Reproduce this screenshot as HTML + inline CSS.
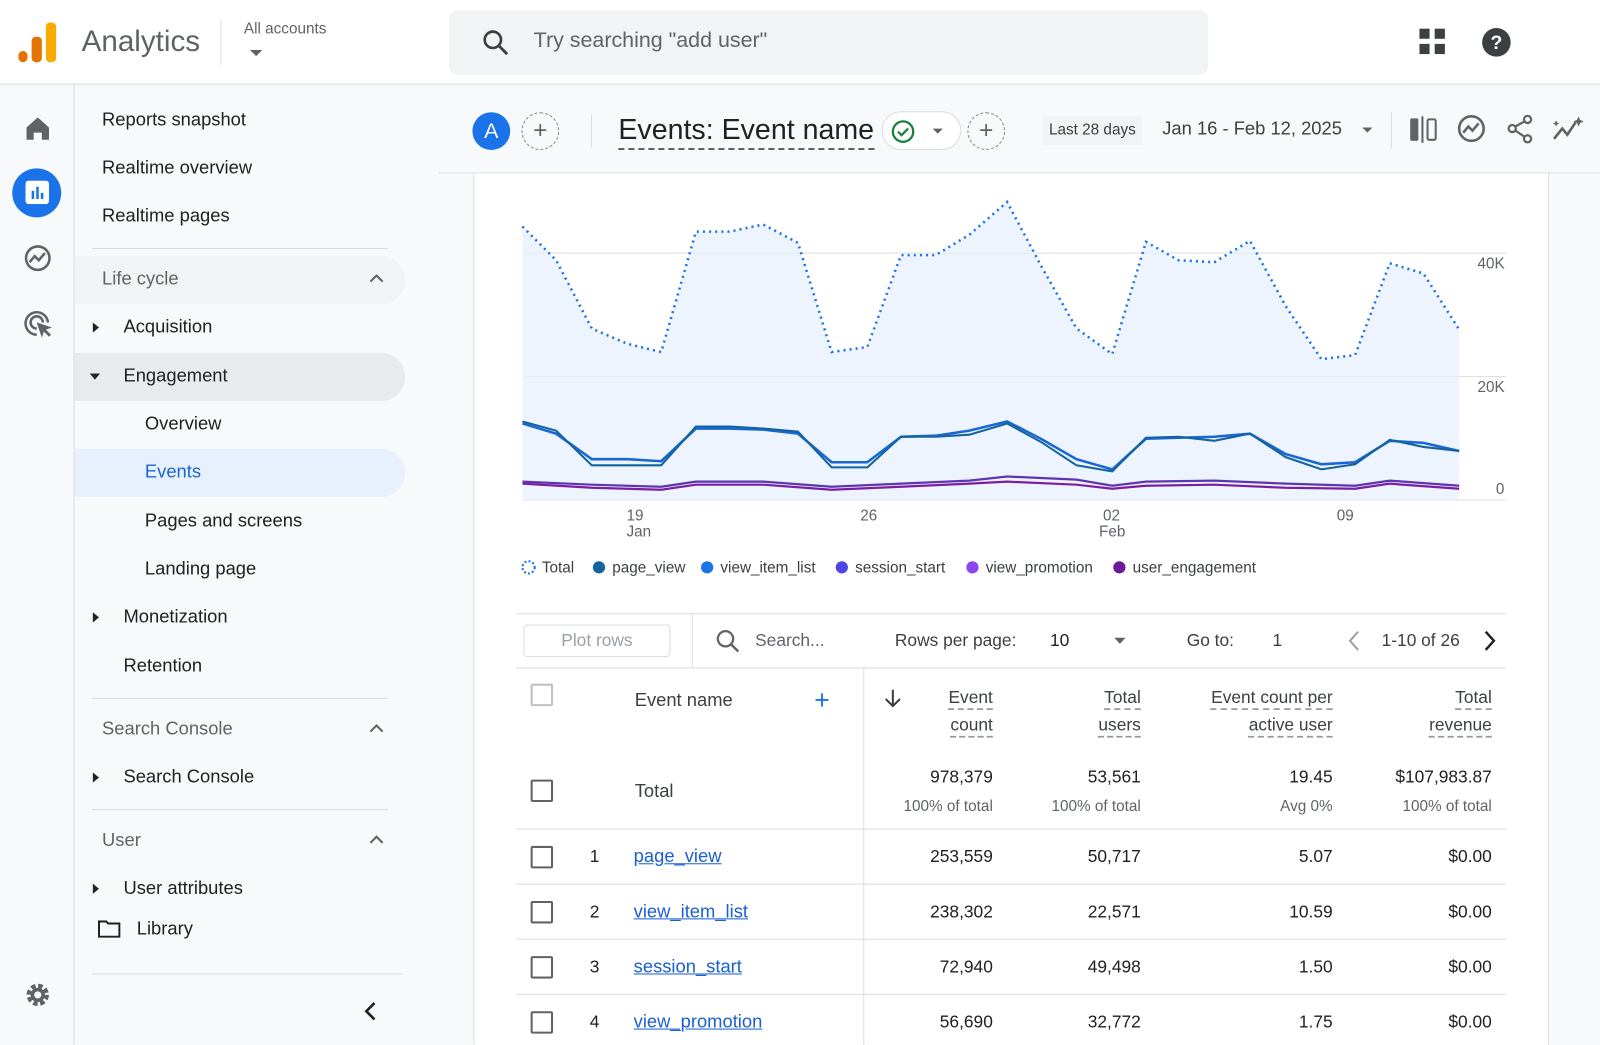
<!DOCTYPE html>
<html><head><meta charset="utf-8"><style>
*{box-sizing:border-box;margin:0;padding:0}
html,body{width:1600px;height:1045px;overflow:hidden;background:#f8f9fa}
body{font-family:"Liberation Sans",Arial,sans-serif;color:#202124}
#w{position:absolute;left:0;top:0;width:1568px;height:1024px;transform:scale(1.0204);transform-origin:0 0;background:#f8f9fa}
.a{position:absolute;white-space:nowrap}
.nav{font-size:18px;color:#202124}
.sec{font-size:18px;color:#5f6368}
.hr{position:absolute;height:1px;background:#dadce0}
.r{text-align:right}
.num{font-size:17px;color:#202124}
.sub{font-size:15px;color:#5f6368}
.cb{position:absolute;width:22px;height:22px;border:2px solid #5f6368;border-radius:2px}
.lnk{color:#1a5fd0;text-decoration:underline;font-size:18px}
.th{font-size:17px;color:#3c4043;text-decoration:underline dashed #999;text-underline-offset:6px;text-align:right;line-height:27px}
</style></head><body><div id="w">
<div class="a" style="left:0;top:0;width:1568px;height:83px;background:#fff;border-bottom:1px solid #dadce0"></div>
<svg class="a" style="left:18px;top:22px" width="38" height="40"><rect x="0" y="28" width="9" height="11" rx="4.5" fill="#e37400"/><rect x="13" y="14" width="10" height="25" rx="4" fill="#e37400"/><rect x="27" y="0" width="10" height="39" rx="4" fill="#f9ab00"/></svg>
<div class="a" style="left:80px;top:25px;font-size:29px;color:#5f6368">Analytics</div>
<div class="a" style="left:216px;top:20px;width:1px;height:44px;background:#dadce0"></div>
<div class="a" style="left:239px;top:20px;font-size:15px;color:#5f6368">All accounts</div>
<svg class="a" style="left:244px;top:48px" width="14" height="8"><path d="M1 1h12L7 7z" fill="#5f6368"/></svg>
<div class="a" style="left:440px;top:10px;width:744px;height:63px;background:#f1f3f4;border-radius:8px"></div>
<svg class="a" style="left:472px;top:28px" width="28" height="28"><circle cx="11" cy="11" r="8" fill="none" stroke="#3c4043" stroke-width="2.6"/><path d="M17 17l8 8" stroke="#3c4043" stroke-width="2.8"/></svg>
<div class="a" style="left:523px;top:28px;font-size:21px;color:#5f6368">Try searching "add user"</div>
<svg class="a" style="left:1391px;top:28px" width="26" height="26" fill="#3c4043"><rect x="0" y="0" width="10" height="10"/><rect x="15" y="0" width="10" height="10"/><rect x="0" y="15" width="10" height="10"/><rect x="15" y="15" width="10" height="10"/></svg>
<svg class="a" style="left:1452px;top:27px" width="29" height="29"><circle cx="14.5" cy="14.5" r="14" fill="#3c4043"/><text x="14.5" y="21" font-size="19" font-weight="bold" fill="#fff" text-anchor="middle" font-family="Liberation Sans">?</text></svg>
<div class="a" style="left:72px;top:83px;width:1px;height:941px;background:#dadce0"></div>
<svg class="a" style="left:24px;top:113px" width="26" height="26"><path d="M2 12L13 2l11 10v12h-7v-7H9v7H2z" fill="#5f6368"/></svg>
<div class="a" style="left:12px;top:165px;width:48px;height:48px;border-radius:50%;background:#1a73e8"></div>
<svg class="a" style="left:25px;top:177px" width="23" height="23"><rect width="23" height="23" rx="3" fill="#fff"/><rect x="6" y="10" width="2.5" height="8" fill="#1a73e8"/><rect x="10.5" y="6" width="2.5" height="12" fill="#1a73e8"/><rect x="15" y="12" width="2.5" height="6" fill="#1a73e8"/></svg>
<svg class="a" style="left:23px;top:239px" width="28" height="28"><circle cx="14" cy="14" r="11.5" fill="none" stroke="#5f6368" stroke-width="2.5"/><path d="M6 18l5-6 4 4 6-7" fill="none" stroke="#5f6368" stroke-width="2.5"/></svg>
<svg class="a" style="left:23px;top:303px" width="30" height="30"><path d="M13 25A11 11 0 1 1 24 13" fill="none" stroke="#5f6368" stroke-width="2.5"/><path d="M13 19A6 6 0 1 1 19 13" fill="none" stroke="#5f6368" stroke-width="2.5"/><path d="M13 13l15 5-6 2 5 5-2 2-5-5-2 6z" fill="#5f6368"/></svg>
<svg class="a" style="left:23px;top:961px" width="28" height="28"><circle cx="14" cy="14" r="8" fill="none" stroke="#5f6368" stroke-width="6" stroke-dasharray="4 2.3"/><circle cx="14" cy="14" r="7" fill="#5f6368"/><circle cx="14" cy="14" r="3.5" fill="#f8f9fa"/></svg>
<div class="a nav" style="left:100px;top:107px">Reports snapshot</div>
<div class="a nav" style="left:100px;top:154px">Realtime overview</div>
<div class="a nav" style="left:100px;top:201px">Realtime pages</div>
<div class="hr" style="left:90px;top:243px;width:290px"></div>
<div class="a" style="left:73px;top:251px;width:324px;height:47px;border-radius:0 24px 24px 0;background:#f1f3f4"></div>
<div class="a sec" style="left:100px;top:263px">Life cycle</div>
<svg class="a" style="left:362px;top:268px" width="14" height="9"><path d="M1 8l6-6 6 6" fill="none" stroke="#5f6368" stroke-width="2"/></svg>
<svg class="a" style="left:90px;top:315px" width="8" height="12"><path d="M1 1l6 5-6 5z" fill="#202124"/></svg>
<div class="a nav" style="left:121px;top:310px">Acquisition</div>
<div class="a" style="left:73px;top:346px;width:324px;height:47px;border-radius:0 24px 24px 0;background:#e8eaed"></div>
<svg class="a" style="left:87px;top:365px" width="12" height="8"><path d="M1 1h10L6 7z" fill="#202124"/></svg>
<div class="a nav" style="left:121px;top:358px">Engagement</div>
<div class="a nav" style="left:142px;top:405px">Overview</div>
<div class="a" style="left:73px;top:440px;width:324px;height:47px;border-radius:0 24px 24px 0;background:#e8f0fe"></div>
<div class="a nav" style="left:142px;top:452px;color:#1967d2">Events</div>
<div class="a nav" style="left:142px;top:500px">Pages and screens</div>
<div class="a nav" style="left:142px;top:547px">Landing page</div>
<svg class="a" style="left:90px;top:599px" width="8" height="12"><path d="M1 1l6 5-6 5z" fill="#202124"/></svg>
<div class="a nav" style="left:121px;top:594px">Monetization</div>
<div class="a nav" style="left:121px;top:642px">Retention</div>
<div class="hr" style="left:90px;top:684px;width:290px"></div>
<div class="a sec" style="left:100px;top:704px">Search Console</div>
<svg class="a" style="left:362px;top:709px" width="14" height="9"><path d="M1 8l6-6 6 6" fill="none" stroke="#5f6368" stroke-width="2"/></svg>
<svg class="a" style="left:90px;top:756px" width="8" height="12"><path d="M1 1l6 5-6 5z" fill="#202124"/></svg>
<div class="a nav" style="left:121px;top:751px">Search Console</div>
<div class="hr" style="left:90px;top:793px;width:290px"></div>
<div class="a sec" style="left:100px;top:813px">User</div>
<svg class="a" style="left:362px;top:818px" width="14" height="9"><path d="M1 8l6-6 6 6" fill="none" stroke="#5f6368" stroke-width="2"/></svg>
<svg class="a" style="left:90px;top:865px" width="8" height="12"><path d="M1 1l6 5-6 5z" fill="#202124"/></svg>
<div class="a nav" style="left:121px;top:860px">User attributes</div>
<svg class="a" style="left:96px;top:902px" width="22" height="17"><path d="M1 1h7l2 2h11v13H1z" fill="none" stroke="#202124" stroke-width="2"/></svg>
<div class="a nav" style="left:134px;top:900px">Library</div>
<div class="hr" style="left:90px;top:954px;width:305px"></div>
<svg class="a" style="left:356px;top:981px" width="14" height="20"><path d="M11 2L3 10l8 8" fill="none" stroke="#202124" stroke-width="2.6"/></svg>
<div class="a" style="left:430px;top:169px;width:1138px;height:1px;background:#e0e0e0"></div>
<div class="a" style="left:463px;top:110px;width:37px;height:37px;border-radius:50%;background:#1a73e8;color:#fff;font-size:21px;text-align:center;line-height:37px">A</div>
<div class="a" style="left:511px;top:110px;width:37px;height:37px;border-radius:50%;border:1.5px dashed #80868b;color:#5f6368;font-size:24px;text-align:center;line-height:33px">+</div>
<div class="a" style="left:579px;top:112px;width:1px;height:32px;background:#dadce0"></div>
<div class="a" style="left:606px;top:109px;font-size:28px;color:#202124;border-bottom:2px dashed #5f6368;line-height:36px">Events: Event name</div>
<div class="a" style="left:864px;top:109px;width:78px;height:38px;border-radius:19px;border:1px solid #dadce0;background:#fff"></div>
<svg class="a" style="left:873px;top:117px" width="24" height="24"><circle cx="12" cy="12" r="10" fill="none" stroke="#188038" stroke-width="2.2"/><path d="M7 12l3.5 3.5L17 9" fill="none" stroke="#188038" stroke-width="2.2"/></svg>
<svg class="a" style="left:913px;top:125px" width="12" height="7"><path d="M1 1h10L6 6z" fill="#5f6368"/></svg>
<div class="a" style="left:948px;top:110px;width:37px;height:37px;border-radius:50%;border:1.5px dashed #80868b;color:#5f6368;font-size:24px;text-align:center;line-height:33px">+</div>
<div class="a" style="left:1022px;top:114px;height:28px;padding:0 6px;background:#f1f3f4;font-size:15px;line-height:28px;color:#3c4043">Last 28 days</div>
<div class="a" style="left:1139px;top:116px;font-size:18px;color:#3c4043">Jan 16 - Feb 12, 2025</div>
<svg class="a" style="left:1334px;top:124px" width="12" height="7"><path d="M1 1h10L6 6z" fill="#5f6368"/></svg>
<div class="a" style="left:1363px;top:110px;width:1px;height:36px;background:#dadce0"></div>
<svg class="a" style="left:1381px;top:113px" width="28" height="28"><rect x="1" y="3" width="8" height="22" rx="1.5" fill="#5f6368"/><rect x="12" y="1" width="2" height="26" fill="#5f6368"/><rect x="18" y="4" width="8" height="20" rx="1.5" fill="none" stroke="#5f6368" stroke-width="2"/></svg>
<svg class="a" style="left:1428px;top:112px" width="29" height="29"><circle cx="14" cy="14" r="12" fill="none" stroke="#5f6368" stroke-width="2.5"/><path d="M6 18l5-6 4 4 6-7" fill="none" stroke="#5f6368" stroke-width="2.5"/></svg>
<svg class="a" style="left:1477px;top:112px" width="27" height="29"><circle cx="20" cy="5" r="3.5" fill="none" stroke="#5f6368" stroke-width="2.2"/><circle cx="5" cy="14" r="3.5" fill="none" stroke="#5f6368" stroke-width="2.2"/><circle cx="20" cy="24" r="3.5" fill="none" stroke="#5f6368" stroke-width="2.2"/><path d="M8 12l9-5M8 16l9 6" stroke="#5f6368" stroke-width="2.2"/></svg>
<svg class="a" style="left:1521px;top:112px" width="33" height="28"><path d="M2 24l8-10 5 6 8-12" fill="none" stroke="#5f6368" stroke-width="2.6"/><path d="M26 2l1.5 3.5L31 7l-3.5 1.5L26 12l-1.5-3.5L21 7l3.5-1.5z" fill="#5f6368"/><path d="M4 6l1 2 2 1-2 1-1 2-1-2-2-1 2-1z" fill="#5f6368"/></svg>
<div class="a" style="left:464px;top:170px;width:1054px;height:854px;background:#fff;border-left:1px solid #e0e0e0;border-right:1px solid #e0e0e0"></div>
<svg class="a" style="left:464px;top:170px" width="1054" height="400" font-family="Liberation Sans" font-size="15" fill="#5f6368">
<g transform="translate(-464,-170)">
<line x1="512" y1="248" x2="1476" y2="248" stroke="#e0e0e0"/>
<line x1="512" y1="369" x2="1476" y2="369" stroke="#e0e0e0"/>
<line x1="512" y1="490" x2="1476" y2="490" stroke="#e0e0e0"/>
<path d="M512,222 545,255 580,322 615,337 648,345 682,227 715,227 748,220 782,238 815,345 850,340 883,250 917,250 950,230 987,198 1020,260 1055,322 1090,347 1123,237 1155,255 1190,257 1225,236 1260,300 1295,352 1328,348 1362,258 1395,268 1430,323 L1430,490 512,490Z" fill="#e8f0fe" opacity="0.75"/>
<path d="M512,222 545,255 580,322 615,337 648,345 682,227 715,227 748,220 782,238 815,345 850,340 883,250 917,250 950,230 987,198 1020,260 1055,322 1090,347 1123,237 1155,255 1190,257 1225,236 1260,300 1295,352 1328,348 1362,258 1395,268 1430,323" fill="none" stroke="#1a73e8" stroke-width="2.5" stroke-dasharray="2 4"/>
<path d="M512,415 545,425 580,450 615,450 648,452 682,420 715,420 748,421 782,425 815,453 850,453 883,428 917,427 950,422 987,413 1020,430 1055,450 1090,460 1123,430 1155,429 1190,428 1225,425 1260,445 1295,455 1328,453 1362,432 1395,434 1430,442" fill="none" stroke="#1967d2" stroke-width="2.5"/>
<path d="M512,413 545,422 580,456 615,456 648,456 682,418 715,418 748,420 782,423 815,458 850,458 883,428 917,428 950,426 987,415 1020,433 1055,456 1090,462 1123,429 1155,428 1190,432 1225,425 1260,448 1295,460 1328,455 1362,431 1395,438 1430,442" fill="none" stroke="#12639e" stroke-width="2"/>
<path d="M512,472 580,475 648,477 682,472 748,472 815,477 883,474 950,471 987,467 1055,470 1090,476 1123,472 1190,471 1260,474 1328,476 1362,471 1430,476" fill="none" stroke="#5e35b1" stroke-width="2.2"/>
<path d="M512,474 580,478 648,480 682,475 748,475 815,480 883,477 950,474 987,472 1055,475 1090,479 1123,476 1190,475 1260,478 1328,479 1362,474 1430,479" fill="none" stroke="#7b1fa2" stroke-width="2.2"/>
<text x="1448" y="263">40K</text><text x="1448" y="384">20K</text><text x="1466" y="484">0</text>
<text x="614" y="510">19</text><text x="614" y="526">Jan</text><text x="843" y="510">26</text><text x="1081" y="510">02</text><text x="1077" y="526">Feb</text><text x="1310" y="510">09</text>
<g font-size="15" fill="#3c4043">
<circle cx="518" cy="556" r="6" fill="none" stroke="#1a73e8" stroke-width="2" stroke-dasharray="2 2"/><text x="531" y="561">Total</text>
<circle cx="587" cy="556" r="6" fill="#12639e"/><text x="600" y="561">page_view</text>
<circle cx="693" cy="556" r="6" fill="#1a73e8"/><text x="706" y="561">view_item_list</text>
<circle cx="825" cy="556" r="6" fill="#4f46e5"/><text x="838" y="561">session_start</text>
<circle cx="953" cy="556" r="6" fill="#8e44ef"/><text x="966" y="561">view_promotion</text>
<circle cx="1097" cy="556" r="6" fill="#6a1b9a"/><text x="1110" y="561">user_engagement</text>
</g></g></svg>
<div class="hr" style="left:506px;top:601px;width:970px"></div>
<div class="a" style="left:513px;top:612px;width:144px;height:32px;border:1px solid #dadce0;border-radius:4px;color:#9aa0a6;font-size:17px;text-align:center;line-height:30px">Plot rows</div>
<div class="a" style="left:678px;top:601px;width:1px;height:53px;background:#dadce0"></div>
<svg class="a" style="left:701px;top:616px" width="26" height="26"><circle cx="10" cy="10" r="7.5" fill="none" stroke="#5f6368" stroke-width="2.2"/><path d="M15.5 15.5l7 7" stroke="#5f6368" stroke-width="2.4"/></svg>
<div class="a" style="left:740px;top:618px;font-size:17px;color:#5f6368">Search...</div>
<div class="a" style="left:877px;top:618px;font-size:17px;color:#3c4043">Rows per page:</div>
<div class="a" style="left:1029px;top:618px;font-size:17px;color:#202124">10</div>
<svg class="a" style="left:1091px;top:624px" width="13" height="8"><path d="M1 1h11L6.5 7z" fill="#5f6368"/></svg>
<div class="a" style="left:1163px;top:618px;font-size:17px;color:#3c4043">Go to:</div>
<div class="a" style="left:1247px;top:618px;font-size:17px;color:#3c4043">1</div>
<svg class="a" style="left:1320px;top:617px" width="14" height="22"><path d="M11 2L3 11l8 9" fill="none" stroke="#9aa0a6" stroke-width="2"/></svg>
<div class="a" style="left:1354px;top:618px;font-size:17px;color:#3c4043">1-10 of 26</div>
<svg class="a" style="left:1453px;top:617px" width="14" height="22"><path d="M3 2l8 9-8 9" fill="none" stroke="#202124" stroke-width="2.4"/></svg>
<div class="hr" style="left:506px;top:654px;width:970px"></div>
<div class="a" style="left:846px;top:654px;width:1px;height:370px;background:#dadce0"></div>
<div class="cb" style="left:520px;top:670px;border-color:#bdc1c6"></div>
<div class="a" style="left:622px;top:676px;font-size:18px;color:#3c4043">Event name</div>
<div class="a" style="left:798px;top:671px;font-size:26px;color:#1a73e8">+</div>
<svg class="a" style="left:866px;top:675px" width="18" height="20"><path d="M9 1v16M2 10l7 7 7-7" fill="none" stroke="#3c4043" stroke-width="2"/></svg>
<div class="a th" style="right:595px;top:670px">Event<br>count</div>
<div class="a th" style="right:450px;top:670px">Total<br>users</div>
<div class="a th" style="right:262px;top:670px">Event count per<br>active user</div>
<div class="a th" style="right:106px;top:670px">Total<br>revenue</div>
<div class="cb" style="left:520px;top:764px"></div>
<div class="a" style="left:622px;top:765px;font-size:18px;color:#3c4043">Total</div>
<div class="a num r" style="right:595px;top:752px">978,379</div><div class="a sub r" style="right:595px;top:782px">100% of total</div>
<div class="a num r" style="right:450px;top:752px">53,561</div><div class="a sub r" style="right:450px;top:782px">100% of total</div>
<div class="a num r" style="right:262px;top:752px">19.45</div><div class="a sub r" style="right:262px;top:782px">Avg 0%</div>
<div class="a num r" style="right:106px;top:752px">$107,983.87</div><div class="a sub r" style="right:106px;top:782px">100% of total</div>
<div class="hr" style="left:506px;top:812px;width:970px"></div>
<div class="cb" style="left:520px;top:829px"></div><div class="a num" style="left:578px;top:830px">1</div><div class="a lnk" style="left:621px;top:829px">page_view</div>
<div class="a num r" style="right:595px;top:830px">253,559</div><div class="a num r" style="right:450px;top:830px">50,717</div><div class="a num r" style="right:262px;top:830px">5.07</div><div class="a num r" style="right:106px;top:830px">$0.00</div>
<div class="hr" style="left:506px;top:866px;width:970px"></div>
<div class="cb" style="left:520px;top:883px"></div><div class="a num" style="left:578px;top:884px">2</div><div class="a lnk" style="left:621px;top:883px">view_item_list</div>
<div class="a num r" style="right:595px;top:884px">238,302</div><div class="a num r" style="right:450px;top:884px">22,571</div><div class="a num r" style="right:262px;top:884px">10.59</div><div class="a num r" style="right:106px;top:884px">$0.00</div>
<div class="hr" style="left:506px;top:920px;width:970px"></div>
<div class="cb" style="left:520px;top:937px"></div><div class="a num" style="left:578px;top:938px">3</div><div class="a lnk" style="left:621px;top:937px">session_start</div>
<div class="a num r" style="right:595px;top:938px">72,940</div><div class="a num r" style="right:450px;top:938px">49,498</div><div class="a num r" style="right:262px;top:938px">1.50</div><div class="a num r" style="right:106px;top:938px">$0.00</div>
<div class="hr" style="left:506px;top:974px;width:970px"></div>
<div class="cb" style="left:520px;top:991px"></div><div class="a num" style="left:578px;top:992px">4</div><div class="a lnk" style="left:621px;top:991px">view_promotion</div>
<div class="a num r" style="right:595px;top:992px">56,690</div><div class="a num r" style="right:450px;top:992px">32,772</div><div class="a num r" style="right:262px;top:992px">1.75</div><div class="a num r" style="right:106px;top:992px">$0.00</div>
</div></body></html>
